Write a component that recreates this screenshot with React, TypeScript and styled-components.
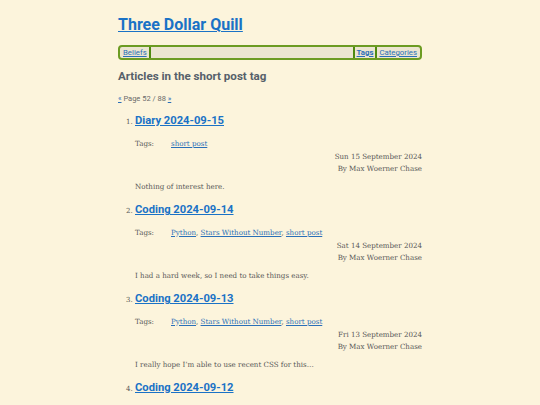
import React from 'react'
import styled, { createGlobalStyle } from 'styled-components'

const GlobalStyle = createGlobalStyle`
  body {
    margin: 0;
    background: #fcf4dc;
    font-family: "DejaVu Serif", "Liberation Serif", serif;
    color: #575757;
  }
`

const Page = styled.div`
  width: 304px;
  margin: 0 auto;
  padding-top: 15px;
`

const SiteTitle = styled.h1`
  margin: 0;
  font-family: Roboto, "Liberation Sans", sans-serif;
  font-size: 16px;
  line-height: 20px;
  font-weight: 700;
  a {
    color: #1a72c6;
  }
`

const Nav = styled.nav`
  margin-top: 10px;
  border: 2px solid #6c9b22;
  border-radius: 4px;
  background: #ece5d0;
  display: flex;
  align-items: stretch;
  height: 11px;
  padding: 0 1px;
  font-family: Roboto, "Liberation Sans", sans-serif;
  font-size: 7.8px;
  line-height: 11px;
`

const NavItem = styled.a<{ $side?: 'left' | 'right'; $bold?: boolean }>`
  color: #2a6fb8;
  padding: 0 2px;
  font-weight: ${(p) => (p.$bold ? 700 : 400)};
  border-${(p) => (p.$side === 'left' ? 'left' : 'right')}: 2px solid #4f8a10;
`

const Spacer = styled.div`
  flex: 1;
`

const Heading = styled.h2`
  margin: 8px 0 0;
  font-family: Roboto, "Liberation Sans", sans-serif;
  font-size: 11.6px;
  line-height: 16px;
  font-weight: 700;
  color: #56606a;
`

const Pager = styled.div`
  margin-top: 10px;
  font-family: Roboto, "Liberation Sans", sans-serif;
  font-size: 7.5px;
  line-height: 10px;
  color: #6a6a6a;
  a {
    color: #2a6fb8;
  }
`

const List = styled.ol`
  margin: 9px 0 0;
  padding-left: 17px;
  li::marker {
    font-size: 7px;
    color: #555;
  }
`

const Item = styled.li`
  margin-bottom: 9px;
`

const ItemTitle = styled.h3`
  margin: 0;
  font-family: Roboto, "Liberation Sans", sans-serif;
  font-size: 11.2px;
  line-height: 16px;
  font-weight: 700;
  a {
    color: #1a72c6;
  }
`

const TagRow = styled.div`
  margin-top: 8.6px;
  display: grid;
  grid-template-columns: 36px 1fr;
  font-size: 7.1px;
  line-height: 12px;
  a {
    color: #2a6fb8;
  }
`

const Meta = styled.div`
  margin-top: 1px;
  text-align: right;
  font-size: 7.1px;
  line-height: 12px;
`

const Summary = styled.p`
  margin: 6.4px 0 0;
  font-size: 7.1px;
  line-height: 12px;
`

type Post = {
  title: string
  tags: string[]
  date: string
  summary: string
}

const posts: Post[] = [
  {
    title: 'Diary 2024-09-15',
    tags: ['short post'],
    date: 'Sun 15 September 2024',
    summary: 'Nothing of interest here.',
  },
  {
    title: 'Coding 2024-09-14',
    tags: ['Python', 'Stars Without Number', 'short post'],
    date: 'Sat 14 September 2024',
    summary: 'I had a hard week, so I need to take things easy.',
  },
  {
    title: 'Coding 2024-09-13',
    tags: ['Python', 'Stars Without Number', 'short post'],
    date: 'Fri 13 September 2024',
    summary: 'I really hope I\u2019m able to use recent CSS for this\u2026',
  },
  {
    title: 'Coding 2024-09-12',
    tags: ['Python', 'Stars Without Number', 'short post'],
    date: 'Thu 12 September 2024',
    summary: 'More work on the project.',
  },
]

export default function App() {
  return (
    <>
      <GlobalStyle />
      <Page>
        <SiteTitle>
          <a href="#">Three Dollar Quill</a>
        </SiteTitle>
        <Nav>
          <NavItem href="#">Beliefs</NavItem>
          <Spacer />
          <NavItem href="#" $side="left" $bold>
            Tags
          </NavItem>
          <NavItem href="#" $side="left">
            Categories
          </NavItem>
        </Nav>
        <Heading>Articles in the short post tag</Heading>
        <Pager>
          <a href="#">«</a> Page 52 / 88 <a href="#">»</a>
        </Pager>
        <List>
          {posts.map((post) => (
            <Item key={post.title}>
              <ItemTitle>
                <a href="#">{post.title}</a>
              </ItemTitle>
              <TagRow>
                <span>Tags:</span>
                <span>
                  {post.tags.map((tag, i) => (
                    <React.Fragment key={tag}>
                      {i > 0 && ', '}
                      <a href="#">{tag}</a>
                    </React.Fragment>
                  ))}
                </span>
              </TagRow>
              <Meta>
                <div>{post.date}</div>
                <div>By Max Woerner Chase</div>
              </Meta>
              <Summary>{post.summary}</Summary>
            </Item>
          ))}
        </List>
      </Page>
    </>
  )
}
